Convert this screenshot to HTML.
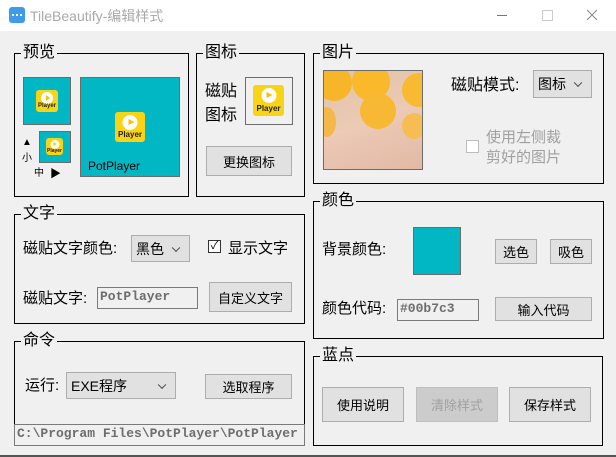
<!DOCTYPE html><html><head><meta charset="utf-8"><style>
*{margin:0;padding:0;box-sizing:border-box}
body{width:616px;height:457px;background:#f0f0f0;position:relative;overflow:hidden;font-family:"Liberation Sans","Noto Sans CJK SC",sans-serif;color:#000}
.a{position:absolute}
.g{position:absolute;border:1px solid #000}
.gt{position:absolute;background:#f0f0f0;font-size:16px;line-height:18px;padding:0 2px;white-space:nowrap}
.t{position:absolute;font-size:15px;line-height:18px;white-space:nowrap}
.btn{position:absolute;background:#e1e1e1;border:1px solid #adadad;font-size:13px;display:flex;align-items:center;justify-content:center;white-space:nowrap}
.sel{position:absolute;background:#e1e1e1;border:1px solid #adadad;font-size:14px;display:flex;align-items:center;padding-left:4px}
.sel:after{content:"";position:absolute;right:10px;top:50%;width:5px;height:5px;border-right:1px solid #444;border-bottom:1px solid #444;transform:translateY(-70%) rotate(45deg)}
.inp{position:absolute;border:1px solid #7a7a7a;background:#f0f0f0;font-family:"Liberation Mono",monospace;font-weight:bold;color:#6d6d6d;font-size:13px;line-height:18px;padding-left:2px;white-space:nowrap;overflow:hidden}
.tile{position:absolute;background:#00b7c3;border:1px solid #6c6c6c}
.ic{position:absolute;background:#f9d315;border-radius:3px}
.ic i{position:absolute;left:50%;border-radius:50%;background:#fff;transform:translateX(-50%)}
.ic i:after{content:"";position:absolute;left:38%;top:25%;width:0;height:0;border-style:solid;border-width:0.25em 0 0.25em 0.4em;border-color:transparent transparent transparent #f4c20d}
.ic b{position:absolute;left:0;right:0;text-align:center;font-weight:bold;color:#222;font-family:"Liberation Sans",sans-serif}
</style></head><body>
<div class="a" style="left:0;top:0;width:616px;height:31px;background:#fff"></div>
<div class="a" style="left:9px;top:7px;width:16px;height:16px;background:#3d9be9;border-radius:3px"></div>
<div class="a" style="left:12px;top:14px;width:10px;height:2px;border-left:2px solid #fff;border-right:2px solid #fff"><div style="margin:0 auto;width:2px;height:2px;background:#fff"></div></div>
<div class="t" style="left:30px;top:7px;font-size:14px;color:#aaa">TileBeautify-编辑样式</div>
<div class="a" style="left:497px;top:15px;width:10px;height:1px;background:#777"></div>
<div class="a" style="left:542px;top:10px;width:11px;height:11px;border:1px solid #ccc"></div>
<svg class="a" style="left:586px;top:9px" width="12" height="12"><path d="M1 1L11 11M11 1L1 11" stroke="#888" stroke-width="1"/></svg>

<!-- 预览 -->
<div class="g" style="left:14px;top:53px;width:175px;height:144px"></div>
<div class="gt" style="left:21px;top:44px">预览</div>
<div class="tile" style="left:23px;top:77px;width:48px;height:48px"></div>
<div class="ic" style="left:36px;top:90px;width:22px;height:22px;font-size:12px"><i style="top:2px;width:12px;height:12px"></i><b style="top:13px;font-size:6px;line-height:7px">Player</b></div>
<div class="tile" style="left:80px;top:77px;width:100px;height:100px"></div>
<div class="ic" style="left:115px;top:112px;width:30px;height:30px;font-size:15px"><i style="top:3px;width:15px;height:15px"></i><b style="top:18px;font-size:8px;line-height:9px">Player</b></div>
<div class="t" style="left:88px;top:157px;font-size:12px;color:#000">PotPlayer</div>
<div class="tile" style="left:39px;top:131px;width:32px;height:32px"></div>
<div class="ic" style="left:46px;top:138px;width:17px;height:17px;font-size:9px"><i style="top:2px;width:9px;height:9px"></i><b style="top:10px;font-size:5px;line-height:6px">Player</b></div>
<div class="t" style="left:22px;top:134px;font-size:10px">▲</div>
<div class="t" style="left:22px;top:150px;font-size:10px">小</div>
<div class="t" style="left:34px;top:165px;font-size:10px">中</div>
<div class="t" style="left:50px;top:165px;font-size:11px">▶</div>

<!-- 图标 -->
<div class="g" style="left:196px;top:53px;width:109px;height:144px"></div>
<div class="gt" style="left:203px;top:44px">图标</div>
<div class="t" style="left:205px;top:83px;font-size:16px">磁贴</div>
<div class="t" style="left:205px;top:107px;font-size:16px">图标</div>
<div class="a" style="left:245px;top:77px;width:48px;height:48px;border:1px solid #6c6c6c"></div>
<div class="ic" style="left:253px;top:85px;width:31px;height:31px;font-size:15px"><i style="top:3px;width:15px;height:15px"></i><b style="top:19px;font-size:8px;line-height:9px">Player</b></div>
<div class="btn" style="left:206px;top:146px;width:86px;height:30px">更换图标</div>

<!-- 图片 -->
<div class="g" style="left:313px;top:53px;width:291px;height:131px"></div>
<div class="gt" style="left:320px;top:44px">图片</div>
<div class="a" style="left:323px;top:70px;width:100px;height:100px;border:1px solid #6c6c6c;overflow:hidden;background:linear-gradient(160deg,#e0c4a4,#eccab6 50%,#e2b9a4)">
<div class="a" style="left:-8px;top:-6px;width:36px;height:36px;border-radius:50%;background:#f7b52a"></div>
<div class="a" style="left:28px;top:-8px;width:38px;height:38px;border-radius:50%;background:#f9b92a"></div>
<div class="a" style="left:36px;top:22px;width:36px;height:36px;border-radius:50%;background:#f7b834"></div>
<div class="a" style="left:78px;top:2px;width:34px;height:34px;border-radius:50%;background:#f7ba30"></div>
<div class="a" style="left:-6px;top:36px;width:18px;height:30px;border-radius:50%;background:#f4b84a"></div>
<div class="a" style="left:78px;top:42px;width:24px;height:26px;border-radius:50%;background:#f5bd52"></div>
</div>
<div class="t" style="left:451px;top:77px;font-size:16px">磁贴模式:</div>
<div class="sel" style="left:533px;top:70px;width:59px;height:28px">图标</div>
<div class="a" style="left:466px;top:140px;width:13px;height:13px;border:1px solid #bcbcbc;background:#fff"></div>
<div class="t" style="left:486px;top:129px;font-size:15px;color:#a0a0a0">使用左侧裁</div>
<div class="t" style="left:486px;top:149px;font-size:15px;color:#a0a0a0">剪好的图片</div>

<!-- 文字 -->
<div class="g" style="left:14px;top:214px;width:291px;height:110px"></div>
<div class="gt" style="left:21px;top:205px">文字</div>
<div class="t" style="left:23px;top:240px">磁贴文字颜色:</div>
<div class="sel" style="left:131px;top:235px;width:59px;height:27px">黑色</div>
<div class="a" style="left:208px;top:240px;width:13px;height:13px;border:1px solid #333;background:#fff;font-size:11px;line-height:11px;text-align:center">✓</div>
<div class="t" style="left:228px;top:240px">显示文字</div>
<div class="t" style="left:23px;top:290px">磁贴文字:</div>
<div class="inp" style="left:97px;top:287px;width:101px;height:22px">PotPlayer</div>
<div class="btn" style="left:209px;top:282px;width:83px;height:30px">自定义文字</div>

<!-- 命令 -->
<div class="g" style="left:14px;top:341px;width:291px;height:105px"></div>
<div class="gt" style="left:21px;top:332px">命令</div>
<div class="t" style="left:25px;top:377px">运行:</div>
<div class="sel" style="left:66px;top:372px;width:110px;height:27px">EXE程序</div>
<div class="btn" style="left:205px;top:374px;width:87px;height:25px">选取程序</div>
<div class="inp" style="left:14px;top:424px;width:291px;height:22px">C:\Program Files\PotPlayer\PotPlayer</div>

<!-- 颜色 -->
<div class="g" style="left:313px;top:201px;width:291px;height:138px"></div>
<div class="gt" style="left:320px;top:192px">颜色</div>
<div class="t" style="left:322px;top:241px">背景颜色:</div>
<div class="a" style="left:413px;top:227px;width:48px;height:48px;background:#00b7c3;border:1px solid #6c6c6c"></div>
<div class="btn" style="left:495px;top:239px;width:42px;height:25px">选色</div>
<div class="btn" style="left:550px;top:239px;width:42px;height:25px">吸色</div>
<div class="t" style="left:322px;top:300px">颜色代码:</div>
<div class="inp" style="left:397px;top:299px;width:82px;height:22px">#00b7c3</div>
<div class="btn" style="left:495px;top:297px;width:97px;height:24px">输入代码</div>

<!-- 蓝点 -->
<div class="g" style="left:313px;top:356px;width:290px;height:90px"></div>
<div class="gt" style="left:320px;top:347px">蓝点</div>
<div class="btn" style="left:322px;top:387px;width:82px;height:35px">使用说明</div>
<div class="btn" style="left:416px;top:387px;width:82px;height:35px;background:#cccccc;border-color:#bfbfbf;color:#a0a0a0">清除样式</div>
<div class="btn" style="left:509px;top:387px;width:82px;height:35px">保存样式</div>
<div class="a" style="left:0;top:455px;width:616px;height:2px;background:#555"></div>
</body></html>
